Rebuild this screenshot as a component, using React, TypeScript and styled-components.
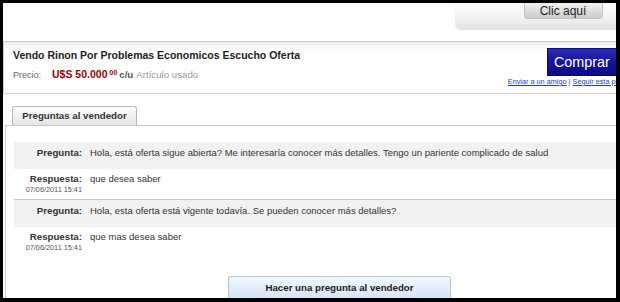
import styled, {createGlobalStyle} from "styled-components";

const GlobalStyle = createGlobalStyle`
  html, body {
    margin: 0;
    padding: 0;
    background: #fff;
  }

  body {
    font-family: "Liberation Sans", Arial, sans-serif;
    color: #333;
  }
`

const Frame = styled.div`
  width: 620px;
  height: 302px;
  box-sizing: border-box;

  border-style: solid;
  border-color: #000;
  border-width: 3px 4px 4px 3px;

  overflow: hidden;
  background: #fff;
`

const Page = styled.div`
  width: 662px;
  height: 100%;

  display: flex;
  flex-direction: column;
`

const TopBar = styled.div`
  height: 38px;
  flex-shrink: 0;

  display: flex;
  justify-content: flex-end;
`

const HelpPanel = styled.div`
  width: 210px;
  height: 26px;

  display: flex;
  justify-content: center;
  align-items: flex-start;

  background: linear-gradient(#fdfdfd, #f3f3f3 55%, #e2e2e2);
  border-bottom-left-radius: 6px;
  box-shadow: 0 1px 1px rgba(0, 0, 0, 0.12);
`

const HelpButton = styled.button`
  width: 79px;
  height: 16px;
  margin: 0 0 0 6px;
  padding: 0;

  border: 1px solid #c2c2c2;
  border-top: none;
  border-radius: 0 0 4px 4px;
  background: linear-gradient(#f2f2f2, #cbcbcb);

  font: 12px/14px "Liberation Sans", Arial, sans-serif;
  color: #1e1e1e;
`

const ProductBox = styled.section`
  height: 53px;
  flex-shrink: 0;
  box-sizing: border-box;

  display: flex;
  justify-content: space-between;

  padding: 6px 16px 0 9px;
  border: 1px solid #cdcdcd;
  background: linear-gradient(#eaeaea 0, #f7f7f7 4px, #fff 10px);
`

const ProductInfo = styled.div`
  padding-top: 1px;

  display: flex;
  flex-direction: column;
`

const ProductTitle = styled.h1`
  margin: 0;

  font-size: 10.5px;
  line-height: 13px;
  font-weight: bold;
  color: #222;
`

const PriceRow = styled.div`
  margin-top: 4px;

  font-size: 9px;
  line-height: 14px;
  color: #666;
  white-space: nowrap;
`

const PriceLabel = styled.span`
  margin-right: 11px;
`

const PriceValue = styled.span`
  font-size: 10.5px;
  font-weight: bold;
  color: #a00000;
`

const PriceCents = styled.sup`
  font-size: 7px;
  font-weight: bold;
  color: #a00000;
  margin-left: 2px;
  vertical-align: 3px;
`

const Unit = styled.span`
  margin-left: 2px;
  font-size: 9.7px;
  font-weight: bold;
  color: #555;
`

const Condition = styled.span`
  margin-left: 3px;
  font-size: 9.7px;
  color: #999;
`

const BuyColumn = styled.div`
  display: flex;
  flex-direction: column;
  align-items: center;
`

const BuyButton = styled.button`
  width: 70px;
  height: 28px;
  margin-left: 8px;
  padding: 0;

  border: 1px solid #0b0b6e;
  background: linear-gradient(#2b2bb8, #15159a 50%, #0c0c84);

  font: 14.4px/26px "Liberation Sans", Arial, sans-serif;
  color: #fff;
`

const LinkRow = styled.div`
  margin-top: 1px;

  font-size: 7.3px;
  line-height: 10px;
  color: #555;
  white-space: nowrap;
`

const SmallLink = styled.a`
  color: #1a3fcc;
  text-decoration: underline;
`

const TabStrip = styled.div`
  margin-top: 12px;
  padding-left: 9px;

  display: flex;
`

const Tab = styled.div`
  width: 125px;
  height: 19px;
  box-sizing: border-box;

  border: 1px solid #b8b8b8;
  border-bottom: none;
  border-radius: 3px 3px 0 0;
  background: linear-gradient(#ffffff, #f1f1f1 50%, #e4e4e4);

  font-size: 9.7px;
  line-height: 18px;
  font-weight: bold;
  text-align: center;
  color: #333;
`

const TabPanel = styled.div`
  flex: 1;
  margin-left: 2px;
  padding: 16px 0 0 8px;

  border-top: 1px solid #c8c8c8;
  border-left: 1px solid #c8c8c8;

  display: flex;
  flex-direction: column;
`

const QaRow = styled.div<{ $shaded?: boolean; $divider?: boolean }>`
  display: grid;
  grid-template-columns: 68px 1fr;
  column-gap: 8px;

  padding: ${p => p.$shaded ? "5px 0 9px" : "4px 0 4px"};
  background: ${p => p.$shaded ? "#f1f1f1" : "transparent"};
  border-bottom: 1px solid ${p => p.$divider ? "#c8c8c8" : "transparent"};

  font-size: 9.7px;
  line-height: 12px;
`

const QaLabel = styled.div`
  display: flex;
  flex-direction: column;
  align-items: flex-end;

  font-weight: bold;
  color: #333;
  white-space: nowrap;
`

const QaDate = styled.span`
  font-size: 7.3px;
  line-height: 9.5px;
  font-weight: normal;
  color: #555;
`

const QaText = styled.div`
  font-size: 9.5px;
  color: #333;
  white-space: nowrap;
`

const AskRow = styled.div`
  margin-top: 19px;

  display: flex;
  justify-content: center;
`

const AskButton = styled.button`
  width: 223px;
  height: 24px;
  padding: 0;

  border: 1px solid #a9c4df;
  border-radius: 2px;
  background: linear-gradient(#f2f8fd, #e2eef9 50%, #d3e4f4);

  font: bold 9.7px/22px "Liberation Sans", Arial, sans-serif;
  color: #222;
`

type QA = {
    question: string
    answer: string
    date: string
}

const questions: QA[] = [
    {
        question: "Hola, está oferta sigue abierta? Me interesaría conocer más detalles. Tengo un pariente complicado de salud",
        answer: "que desea saber",
        date: "07/06/2011 15:41",
    },
    {
        question: "Hola, esta oferta está vigente todavía. Se pueden conocer más detalles?",
        answer: "que mas desea saber",
        date: "07/06/2011 15:41",
    },
]

const App = () => {
    return (
        <>
            <GlobalStyle/>
            <Frame>
                <Page>
                    <TopBar>
                        <HelpPanel>
                            <HelpButton>Clic aquí</HelpButton>
                        </HelpPanel>
                    </TopBar>

                    <ProductBox>
                        <ProductInfo>
                            <ProductTitle>Vendo Rinon Por Problemas Economicos Escucho Oferta</ProductTitle>
                            <PriceRow>
                                <PriceLabel>Precio:</PriceLabel>
                                <PriceValue>U$S 50.000</PriceValue>
                                <PriceCents>00</PriceCents>
                                <Unit>c/u</Unit>
                                <Condition>Artículo usado</Condition>
                            </PriceRow>
                        </ProductInfo>

                        <BuyColumn>
                            <BuyButton>Comprar</BuyButton>
                            <LinkRow>
                                <SmallLink>Enviar a un amigo</SmallLink> | <SmallLink>Seguir esta publicación</SmallLink>
                            </LinkRow>
                        </BuyColumn>
                    </ProductBox>

                    <TabStrip>
                        <Tab>Preguntas al vendedor</Tab>
                    </TabStrip>

                    <TabPanel>
                        {questions.map((qa, i) => (
                            <div key={i}>
                                <QaRow $shaded>
                                    <QaLabel>Pregunta:</QaLabel>
                                    <QaText>{qa.question}</QaText>
                                </QaRow>
                                <QaRow $divider={i < questions.length - 1}>
                                    <QaLabel>
                                        Respuesta:
                                        <QaDate>{qa.date}</QaDate>
                                    </QaLabel>
                                    <QaText>{qa.answer}</QaText>
                                </QaRow>
                            </div>
                        ))}

                        <AskRow>
                            <AskButton>Hacer una pregunta al vendedor</AskButton>
                        </AskRow>
                    </TabPanel>
                </Page>
            </Frame>
        </>
    )
}

export default App;
